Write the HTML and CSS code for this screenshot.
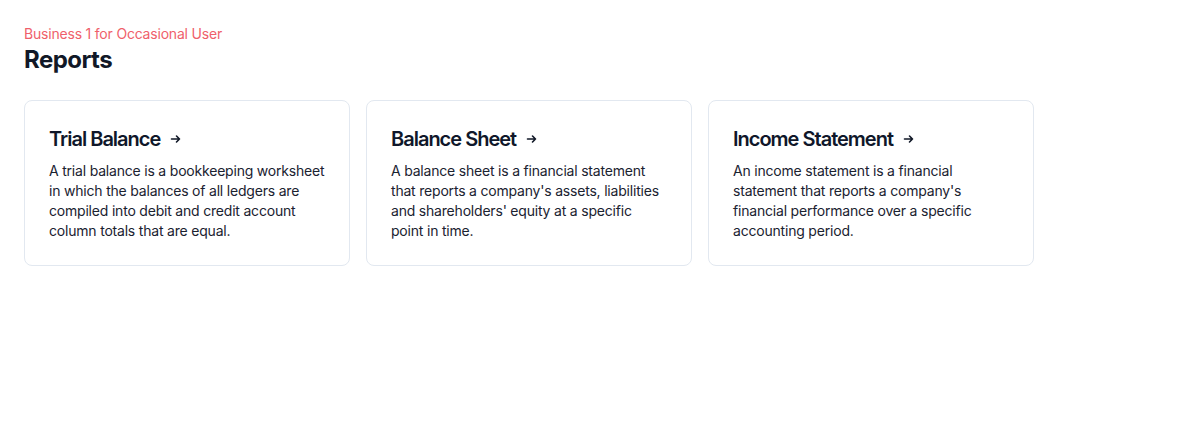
FILE: index.html
```html
<!DOCTYPE html>
<html lang="en">
<head>
<meta charset="utf-8">
<title>Reports</title>
<link rel="stylesheet" href="styles.css">
</head>
<body>
<main class="page">
  <header class="page-header">
    <p class="eyebrow">Business 1 for Occasional User</p>
    <h1 class="page-title">Reports</h1>
  </header>
  <section class="report-grid">
    <a class="report-card" href="#">
      <h2 class="report-title">Trial Balance
        <svg class="arrow" width="12" height="12" viewBox="0 0 12 12" fill="none"><path d="M1.5 6h8M6.5 3l3 3-3 3" stroke="currentColor" stroke-width="1.6" stroke-linecap="round" stroke-linejoin="round"/></svg>
      </h2>
      <p class="report-desc">A trial balance is a bookkeeping worksheet in which the balances of all ledgers are compiled into debit and credit account column totals that are equal.</p>
    </a>
    <a class="report-card" href="#">
      <h2 class="report-title">Balance Sheet
        <svg class="arrow" width="12" height="12" viewBox="0 0 12 12" fill="none"><path d="M1.5 6h8M6.5 3l3 3-3 3" stroke="currentColor" stroke-width="1.6" stroke-linecap="round" stroke-linejoin="round"/></svg>
      </h2>
      <p class="report-desc">A balance sheet is a financial statement that reports a company's assets, liabilities and shareholders' equity at a specific point in time.</p>
    </a>
    <a class="report-card" href="#">
      <h2 class="report-title">Income Statement
        <svg class="arrow" width="12" height="12" viewBox="0 0 12 12" fill="none"><path d="M1.5 6h8M6.5 3l3 3-3 3" stroke="currentColor" stroke-width="1.6" stroke-linecap="round" stroke-linejoin="round"/></svg>
      </h2>
      <p class="report-desc">An income statement is a financial statement that reports a company's financial performance over a specific accounting period.</p>
    </a>
  </section>
</main>
</body>
</html>
```
FILE: styles.css
```css
* { box-sizing: border-box; }
html, body { margin: 0; padding: 0; background: #ffffff; }
body {
  font-family: Inter, "Noto Sans", "Liberation Sans", sans-serif;
  color: #111827;
  -webkit-font-smoothing: antialiased;
}
.page {
  padding: 24px;
  max-width: 1058px;
}
.page-header { margin: 0 0 24px; }
.eyebrow {
  margin: 0;
  font-size: 14px;
  line-height: 20px;
  color: #ef5f6b;
  letter-spacing: -0.2px;
}
.page-title {
  margin: 0;
  font-size: 24px;
  line-height: 32px;
  font-weight: 700;
  color: #111827;
  letter-spacing: -0.55px;
}
.report-grid {
  display: grid;
  grid-template-columns: repeat(3, 1fr);
  gap: 16px;
}
.report-card {
  display: block;
  border: 1px solid #e2e8f0;
  border-radius: 8px;
  padding: 24px 23.5px 24px 24px;
  text-decoration: none;
  color: inherit;
  background: #fff;
}
.report-title {
  margin: 0 0 8px;
  display: flex;
  align-items: center;
  gap: 10px;
  font-size: 20px;
  line-height: 28px;
  font-weight: 600;
  letter-spacing: -1px;
  color: #0f172a;
}
.arrow { color: #111827; flex: none; }
.report-desc {
  margin: 0;
  font-size: 14px;
  line-height: 20px;
  color: #1a2230;
  letter-spacing: -0.2px;
}
```
